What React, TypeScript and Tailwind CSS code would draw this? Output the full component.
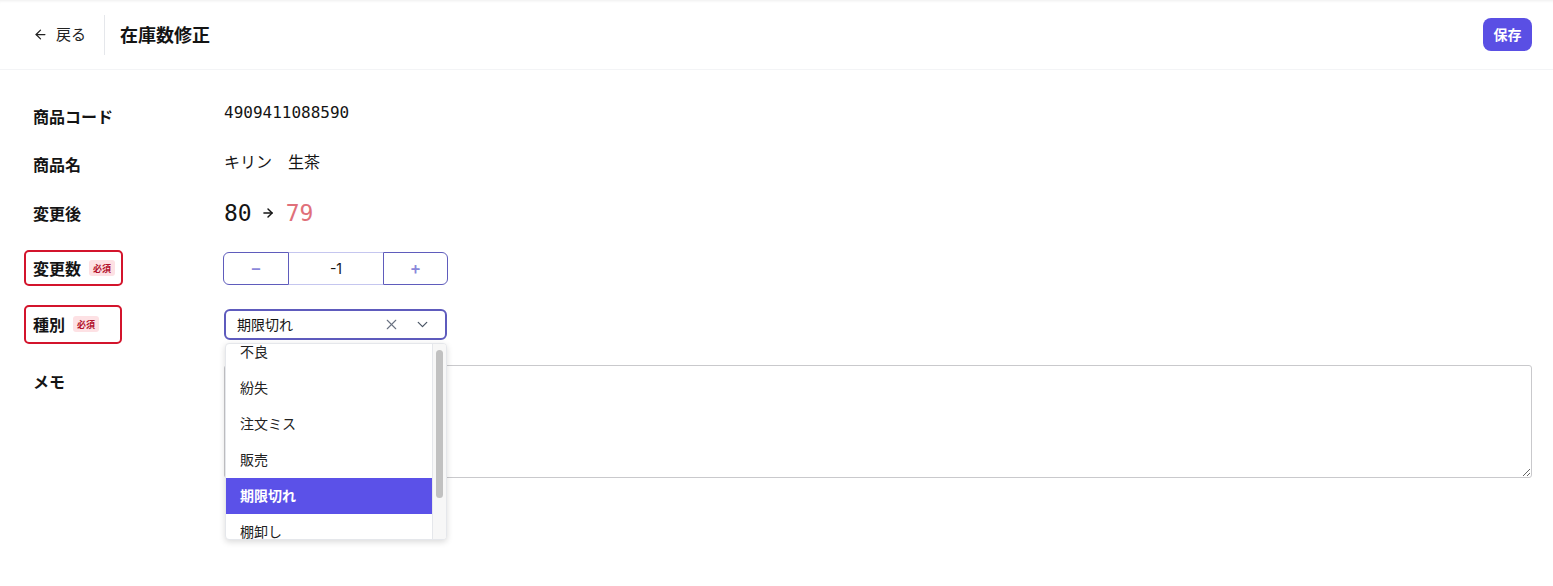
import React from "react";
import { ArrowLeft, ArrowRight, X, ChevronDown } from "lucide-react";

const jp = { fontFamily: '"Noto Sans CJK JP", "Noto Sans", sans-serif' };
const mono = { fontFamily: '"DejaVu Sans Mono", "Liberation Mono", "Noto Sans CJK JP", monospace' };

function Badge() {
  return (
    <span className="ml-[8px] inline-flex items-center h-[16px] px-[4px] rounded-[3px] bg-[#fde1e4] text-[#b3122c] text-[9px] font-bold leading-none">
      必須
    </span>
  );
}

export default function App() {
  const items = ["不良", "紛失", "注文ミス", "販売", "期限切れ", "棚卸し"];
  return (
    <div className="min-h-[586px] bg-white text-[#141414]" style={jp}>
      <header className="h-[70px] flex items-center border-b border-gray-100 pl-[33px] pr-[21px] shadow-[inset_0_3px_3px_-2px_rgba(0,0,0,0.07)]">
        <button className="flex items-center gap-[8px] text-[15px] text-[#222]">
          <ArrowLeft size={15} strokeWidth={2} />
          <span>戻る</span>
        </button>
        <div className="ml-[18px] w-px h-[40px] bg-gray-200" />
        <h1 className="ml-[15px] text-[18px] font-bold">在庫数修正</h1>
        <button className="ml-auto h-[33px] w-[49px] rounded-lg bg-[#5a4fe4] text-white text-[14px] font-bold">
          保存
        </button>
      </header>

      <main className="pl-[33px] pr-[21px] pt-[22px]">
        <div className="flex items-center h-[48px]">
          <div className="w-[191px] shrink-0 text-[16px] font-bold">商品コード</div>
          <div className="pb-[6px] text-[16px]" style={mono}>4909411088590</div>
        </div>
        <div className="flex items-center h-[48px]">
          <div className="w-[191px] shrink-0 text-[16px] font-bold">商品名</div>
          <div className="pb-[6px] text-[16px]">キリン　生茶</div>
        </div>
        <div className="flex items-center h-[50px]">
          <div className="w-[191px] shrink-0 text-[16px] font-bold">変更後</div>
          <div className="flex items-center gap-[9px]" style={mono}>
            <span className="text-[23px]">80</span>
            <ArrowRight size={14} strokeWidth={2.5} />
            <span className="text-[23px] text-[#e0707a] ml-[2px]">79</span>
          </div>
        </div>
        <div className="flex items-center h-[60px]">
          <div className="w-[191px] shrink-0">
            <div className="-ml-[9px] w-[99px] h-[36px] flex items-center pl-[7px] border-2 border-[#d3142c] rounded-[5px]">
              <span className="text-[16px] font-bold">変更数</span>
              <Badge />
            </div>
          </div>
          <div className="flex h-[33px] -ml-[1px]">
            <button className="w-[66px] h-full border border-[#5f5cbc] rounded-l-[6px] text-[#8a87da] text-[16px] font-bold flex items-center justify-center">
              −
            </button>
            <div className="w-[94px] h-full border-y border-[#c5c6ef] flex items-center justify-center text-[14px]" style={{ fontFamily: '"Inter", "Noto Sans", sans-serif' }}>
              -1
            </div>
            <button className="w-[65px] h-full border border-[#5f5cbc] rounded-r-[6px] text-[#8a87da] text-[16px] font-bold flex items-center justify-center">
              +
            </button>
          </div>
        </div>
        <div className="flex items-center h-[52px]">
          <div className="w-[191px] shrink-0">
            <div className="-ml-[9px] w-[98px] h-[39px] flex items-center pl-[7px] border-2 border-[#d3142c] rounded-[5px]">
              <span className="text-[16px] font-bold">種別</span>
              <Badge />
            </div>
          </div>
          <div className="relative w-[223px] h-[31px] z-10">
            <div className="w-full h-full border-2 border-[#5e5bbd] rounded-[6px] flex items-center pl-[11px] pr-[14px] text-[14px]">
              <span className="flex-1">期限切れ</span>
              <X size={17} strokeWidth={1.5} className="text-gray-500" />
              <ChevronDown size={17} strokeWidth={1.75} className="ml-[14px] text-gray-600" />
            </div>
            <div className="absolute top-[34px] left-[1px] w-[222px] h-[197px] bg-white rounded-[4px] border border-gray-200 shadow-[0_2px_6px_rgba(0,0,0,0.15)] overflow-hidden">
              <div className="-mt-[10px] mr-[14px]">
                {items.map((it) => (
                  <div
                    key={it}
                    className={
                      it === "期限切れ"
                        ? "h-[36px] flex items-center pl-[14px] text-[14px] bg-[#5b51e8] text-white font-bold"
                        : "h-[36px] flex items-center pl-[14px] text-[14px] text-[#222]"
                    }
                  >
                    {it}
                  </div>
                ))}
              </div>
              <div className="absolute top-0 right-0 w-[14px] h-full bg-[#f7f7f7] border-l border-gray-200">
                <div className="mt-[6px] ml-[3px] w-[7px] h-[148px] rounded-full bg-[#c1c1c1]" />
              </div>
            </div>
          </div>
        </div>
        <div className="flex items-start">
          <div className="w-[191px] shrink-0 pt-[19px] text-[16px] font-bold">メモ</div>
          <div className="flex-1 pt-[15px]">
            <textarea className="block w-full h-[113px] border border-[#c9c9cc] rounded-[3px] outline-none" />
          </div>
        </div>
      </main>
    </div>
  );
}
